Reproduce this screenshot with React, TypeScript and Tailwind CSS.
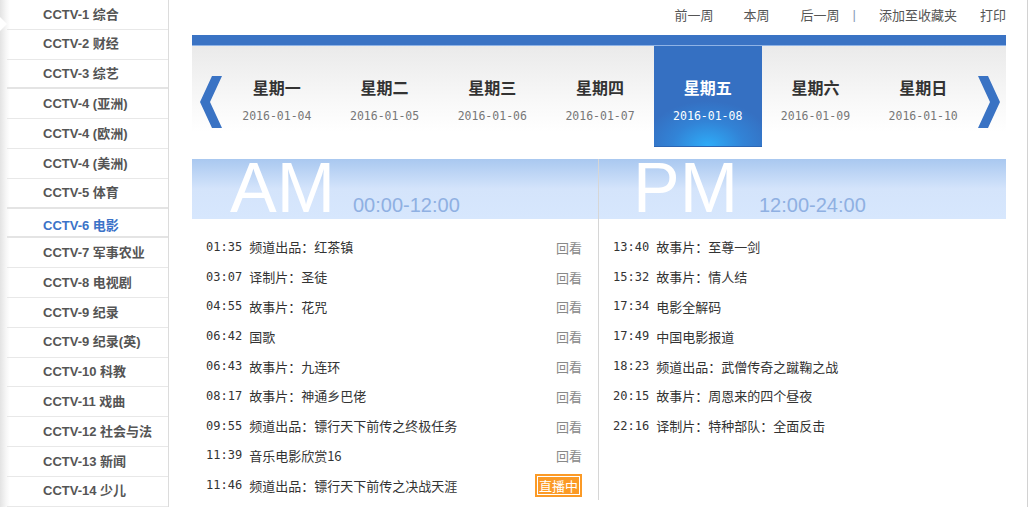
import React from "react";

const channels = [
  "CCTV-1 综合",
  "CCTV-2 财经",
  "CCTV-3 综艺",
  "CCTV-4 (亚洲)",
  "CCTV-4 (欧洲)",
  "CCTV-4 (美洲)",
  "CCTV-5 体育",
  "CCTV-6 电影",
  "CCTV-7 军事农业",
  "CCTV-8 电视剧",
  "CCTV-9 纪录",
  "CCTV-9 纪录(英)",
  "CCTV-10 科教",
  "CCTV-11 戏曲",
  "CCTV-12 社会与法",
  "CCTV-13 新闻",
  "CCTV-14 少儿",
];

const days = [
  ["星期一", "2016-01-04"],
  ["星期二", "2016-01-05"],
  ["星期三", "2016-01-06"],
  ["星期四", "2016-01-07"],
  ["星期五", "2016-01-08"],
  ["星期六", "2016-01-09"],
  ["星期日", "2016-01-10"],
];

const am: [string, string, "back" | "live"][] = [
  ["01:35", "频道出品：红茶镇", "back"],
  ["03:07", "译制片：圣徒", "back"],
  ["04:55", "故事片：花咒", "back"],
  ["06:42", "国歌", "back"],
  ["06:43", "故事片：九连环", "back"],
  ["08:17", "故事片：神通乡巴佬", "back"],
  ["09:55", "频道出品：镖行天下前传之终极任务", "back"],
  ["11:39", "音乐电影欣赏16", "back"],
  ["11:46", "频道出品：镖行天下前传之决战天涯", "live"],
];

const pm: [string, string][] = [
  ["13:40", "故事片：至尊一剑"],
  ["15:32", "故事片：情人结"],
  ["17:34", "电影全解码"],
  ["17:49", "中国电影报道"],
  ["18:23", "频道出品：武僧传奇之蹴鞠之战"],
  ["20:15", "故事片：周恩来的四个昼夜"],
  ["22:16", "译制片：特种部队：全面反击"],
];

const cjk = { fontFamily: '"Noto Sans CJK SC", "Liberation Sans", sans-serif' };
const sideFont = { fontFamily: '"Liberation Sans", "Noto Sans CJK SC", sans-serif' };
const mono = { fontFamily: '"DejaVu Sans Mono", "Liberation Mono", monospace' };
const arial = { fontFamily: '"Liberation Sans", Arial, sans-serif' };

function Row({ time, title, right }: { time: string; title: string; right?: React.ReactNode }) {
  return (
    <div className="h-[29.8px] flex items-center text-[#333]">
      <span className="text-[12px] leading-none" style={mono}>
        {time}
      </span>
      <span className="ml-[7px] text-[13px] leading-none" style={cjk}>
        {title}
      </span>
      <span className="ml-auto">{right}</span>
    </div>
  );
}

export default function App() {
  return (
    <div className="w-[1028px] h-[507px] overflow-hidden flex bg-white border-r border-[#d2d2d2]">
      {/* Sidebar */}
      <div className="relative w-[169px] shrink-0 h-[507px] border-r border-[#dcdcdc] bg-[linear-gradient(to_right,#e3e3e3_0px,#f6f6f6_6px,#ffffff_10px)]">
        <svg className="absolute left-0 top-[17px]" width="8" height="14" viewBox="0 0 8 14">
          <polygon points="0,0 7,7 0,14" fill="#ffffff" />
        </svg>
        {channels.map((c, i) => {
          const selected = i === 7;
          const thick = i === 2 || i === 6 || i === 7;
          return (
            <div
              key={c}
              className={`ml-[7px] h-[29.8px] flex items-center pl-[36px] text-[13px] font-bold ${
                thick ? "border-b-2 border-[#e4e4e4]" : "border-b border-[#e8e8e8]"
              } ${selected ? "text-[#3b73c8] pt-[7px]" : "text-[#555555]"}`}
              style={sideFont}
            >
              {c}
            </div>
          );
        })}
      </div>

      {/* Main */}
      <div className="ml-[23px] w-[814px] shrink-0 flex flex-col">
        {/* Top nav */}
        <div className="h-[35px] flex justify-end text-[13px] leading-[30px] text-[#555]" style={cjk}>
          <span>前一周</span>
          <span className="ml-[30px]">本周</span>
          <span className="ml-[31px]">后一周</span>
          <span className="ml-[13px] text-[#8a9bb8]" style={arial}>|</span>
          <span className="ml-[23px]">添加至收藏夹</span>
          <span className="ml-[23px]">打印</span>
        </div>

        {/* Blue bar */}
        <div className="h-[11px] bg-[#3a73c4] border-b border-[#8fb3e6]" />

        {/* Day tabs */}
        <div className="h-[101px] flex bg-[linear-gradient(to_bottom,#eaeaea,#f7f7f7_50%,#ffffff_85%)]">
          <div className="w-[31px] shrink-0">
            <svg width="31" height="101" viewBox="0 0 31 101">
              <polygon points="20,30 30,30 18,56 30,82 20,82 8,56" fill="#3a73c4" />
            </svg>
          </div>
          {days.map(([d, date], i) => {
            const sel = i === 4;
            return (
              <div
                key={d}
                className={`flex-1 flex flex-col items-center pt-[31px] ${
                  sel
                    ? "bg-[radial-gradient(ellipse_60%_45%_at_50%_100%,#2eacf8_0%,#3283d6_55%,#3570c2_100%)] border-b border-[#2c66b4]"
                    : ""
                }`}
              >
                <div
                  className={`text-[16px] font-bold leading-[20px] ${sel ? "text-white" : "text-[#333]"}`}
                  style={cjk}
                >
                  {d}
                </div>
                <div
                  className={`mt-[11px] text-[11.5px] leading-[16px] ${sel ? "text-white" : "text-[#777]"}`}
                  style={mono}
                >
                  {date}
                </div>
              </div>
            );
          })}
          <div className="w-[29px] shrink-0">
            <svg width="29" height="101" viewBox="0 0 29 101">
              <polygon points="1,30 11,30 23,56 11,82 1,82 13,56" fill="#3a73c4" />
            </svg>
          </div>
        </div>

        {/* Schedule */}
        <div className="mt-[12px] flex">
          {/* AM */}
          <div className="w-[407px] shrink-0 border-r border-[#d6d6d6] h-[341px]">
            <div className="h-[60px] overflow-hidden bg-[linear-gradient(to_bottom,#a9c8f0_0%,#d4e4fb_50%,#d7e7fd_100%)]">
              <div className="mt-[1px] flex items-baseline pl-[38px]" style={arial}>
                <span className="text-[70px] leading-[56px] text-white">AM</span>
                <span className="ml-[18px] text-[20px] leading-[20px] text-[#8fb0e2]">00:00-12:00</span>
              </div>
            </div>
            <div className="pt-[13px] pl-[14px] pr-[16px]">
              {am.map(([t, title, kind]) => (
                <Row
                  key={t}
                  time={t}
                  title={title}
                  right={
                    kind === "back" ? (
                      <span className="text-[13px] leading-none text-[#888]" style={cjk}>
                        回看
                      </span>
                    ) : (
                      <span className="block bg-[#fb9a26] p-[2px]">
                        <span
                          className="block border border-white text-white text-[13px] leading-[17px] px-[1px]"
                          style={cjk}
                        >
                          直播中
                        </span>
                      </span>
                    )
                  }
                />
              ))}
            </div>
          </div>
          {/* PM */}
          <div className="flex-1">
            <div className="h-[60px] overflow-hidden bg-[linear-gradient(to_bottom,#a9c8f0_0%,#d4e4fb_50%,#d7e7fd_100%)]">
              <div className="mt-[1px] flex items-baseline pl-[34px]" style={arial}>
                <span className="text-[70px] leading-[56px] text-white">PM</span>
                <span className="ml-[21px] text-[20px] leading-[20px] text-[#8fb0e2]">12:00-24:00</span>
              </div>
            </div>
            <div className="pt-[13px] pl-[14px] pr-[16px]">
              {pm.map(([t, title]) => (
                <Row key={t} time={t} title={title} />
              ))}
            </div>
          </div>
        </div>
      </div>
    </div>
  );
}
